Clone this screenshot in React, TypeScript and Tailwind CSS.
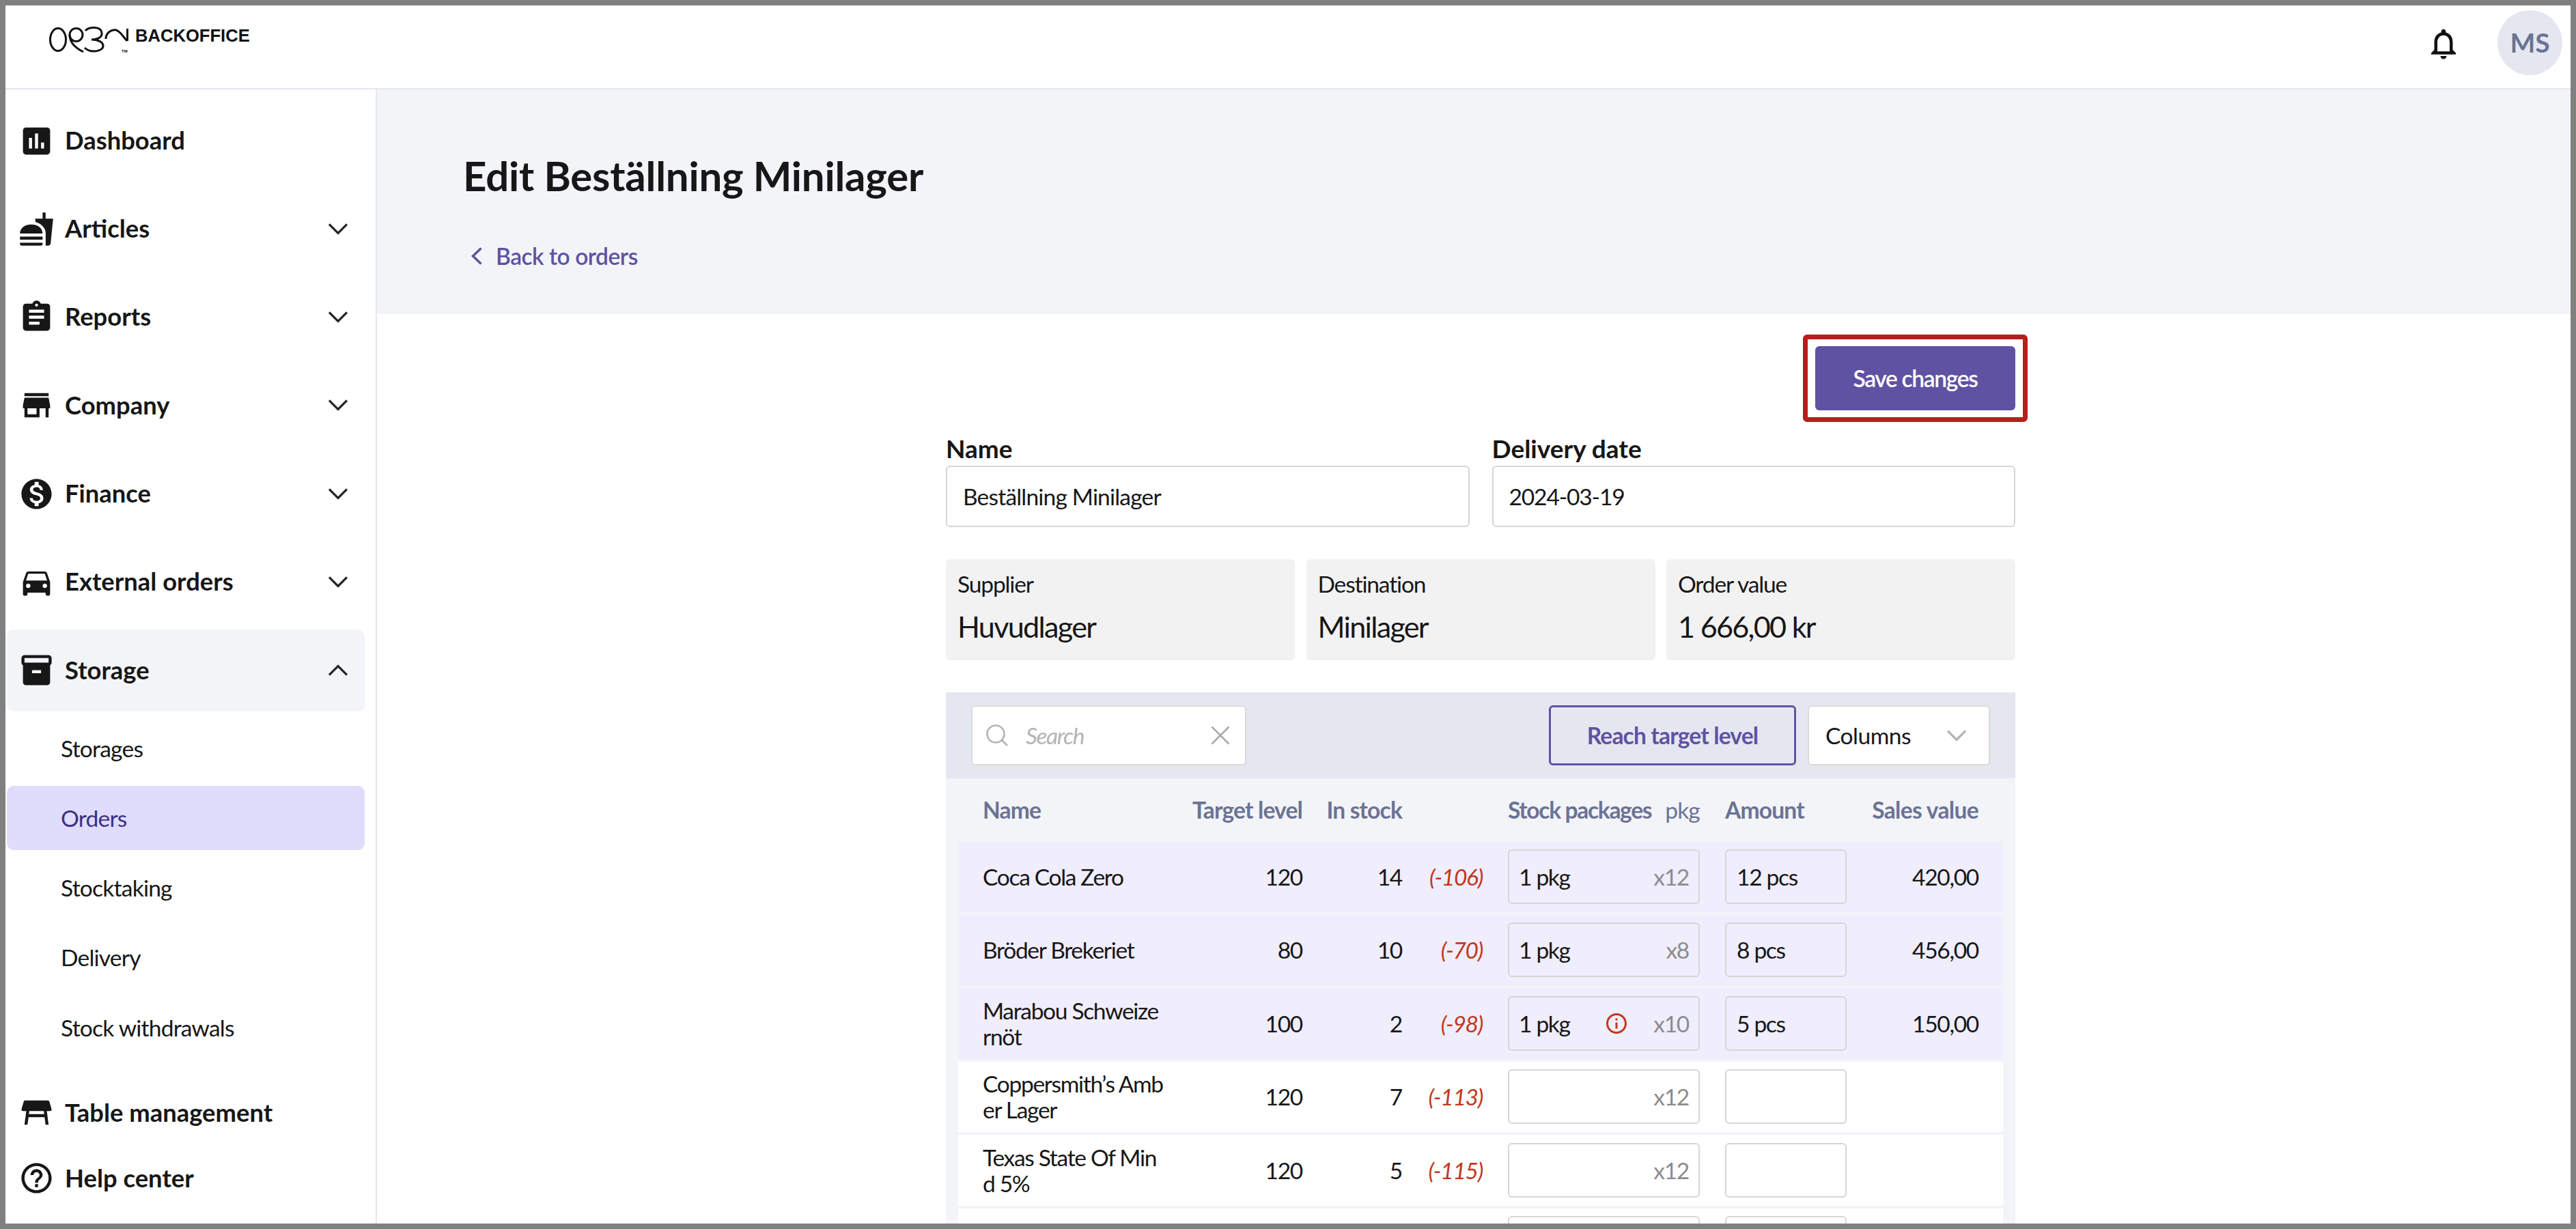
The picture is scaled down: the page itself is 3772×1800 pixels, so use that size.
import React from 'react';
import {
  MdInsertChart,
  MdFastfood,
  MdAssignment,
  MdStore,
  MdMonetizationOn,
  MdDirectionsCar,
  MdInventory2,
  MdTableRestaurant,
  MdHelpOutline,
  MdOutlineNotifications,
  MdInfoOutline,
} from 'react-icons/md';

const Chevron = ({ up = false, className = '' }: { up?: boolean; className?: string }) => (
  <svg viewBox="0 0 28 17" fill="none" stroke="currentColor" strokeWidth="3.2" className={`w-[28px] h-[17px] ${className}`}>
    <path d={up ? 'M1 15.5 14 2.5l13 13' : 'M1 1.5l13 13 13-13'} />
  </svg>
);

const Logo = () => (
  <div className="flex items-start ml-[58px] tracking-normal">
    <svg viewBox="0 0 130 46" fill="none" stroke="#111" strokeWidth="3" className="w-[130px] h-[46px] mt-[-1px]">
      <ellipse cx="19" cy="22" rx="11.5" ry="16.5" />
      <circle cx="45.5" cy="15" r="9.5" />
      <path d="M36 15c0 11 8 19 20 25" />
      <path d="M59 9c5-6 23-7 24 3 1 7-7 10-15 10 10 0 17 4 17 9 0 9-19 11-27 3" />
      <path d="M89 21c0-9 8-14 15-13 3 1 5 3 7 5l9 11" />
      <path d="M120.5 6v18" />
      <text x="112" y="41" fontSize="6" fontWeight="700" fill="#111" stroke="none" className="[font-family:'Liberation_Sans',sans-serif]">TM</text>
    </svg>
    <span className="ml-[2px] text-[25.6px] leading-[30px] font-bold text-[#111] [font-family:'Liberation_Sans',sans-serif]">BACKOFFICE</span>
  </div>
);

const navTop = [
  { label: 'Dashboard', icon: MdInsertChart, arrow: false },
  { label: 'Articles', icon: MdFastfood, arrow: true },
  { label: 'Reports', icon: MdAssignment, arrow: true },
  { label: 'Company', icon: MdStore, arrow: true },
  { label: 'Finance', icon: MdMonetizationOn, arrow: true },
  { label: 'External orders', icon: MdDirectionsCar, arrow: true },
];

const subNav = ['Storages', 'Orders', 'Stocktaking', 'Delivery', 'Stock withdrawals'];

const rows = [
  { name: 'Coca Cola Zero', target: '120', stock: '14', diff: '(-106)', pkg: '1 pkg', mult: 'x12', amount: '12 pcs', sales: '420,00', on: true },
  { name: 'Bröder Brekeriet', target: '80', stock: '10', diff: '(-70)', pkg: '1 pkg', mult: 'x8', amount: '8 pcs', sales: '456,00', on: true },
  { name: 'Marabou Schweizernöt', target: '100', stock: '2', diff: '(-98)', pkg: '1 pkg', mult: 'x10', amount: '5 pcs', sales: '150,00', on: true, warn: true },
  { name: 'Coppersmith’s Amber Lager', target: '120', stock: '7', diff: '(-113)', pkg: '', mult: 'x12', amount: '', sales: '', on: false },
  { name: 'Texas State Of Mind 5%', target: '120', stock: '5', diff: '(-115)', pkg: '', mult: 'x12', amount: '', sales: '', on: false },
  { name: '', target: '', stock: '', diff: '', pkg: '', mult: '', amount: '', sales: '', on: false },
];

const gridCols = 'grid grid-cols-[337px_167px_146px_118px_318px_215px_193px_36px]';

export default function App() {
  return (
    <div className="w-[3772px] h-[1800px] border-8 border-[#808080] bg-white overflow-hidden flex flex-col text-[#171717] tracking-[-0.032em] [font-family:Lato,sans-serif]">
      {/* HEADER */}
      <header className="h-[123px] shrink-0 border-b-2 border-[#e5e7f0] flex items-start justify-between pt-[29px]">
        <Logo />
        <div className="flex items-center mt-[-22px] pr-[12px]">
          <MdOutlineNotifications className="w-[54px] h-[54px] text-[#111] mt-[2px]" />
          <div className="w-[95px] h-[95px] ml-[52px] rounded-full bg-[#e5e7f0] flex items-center justify-center text-[39px] font-bold tracking-normal text-[#6b7394]">MS</div>
        </div>
      </header>

      <div className="flex flex-1 min-h-0">
        {/* SIDEBAR */}
        <aside className="w-[544px] shrink-0 border-r-2 border-[#e5e7f0] pt-[15px] pl-[2px] pr-[16px]">
          <nav className="flex flex-col gap-[9.33px]">
            {navTop.map((item) => (
              <div key={item.label} className="h-[120px] flex items-center pl-[17px] pr-[25px]">
                <item.icon className="w-[53px] h-[53px] shrink-0 text-[#171717]" />
                <span className="ml-[15px] mb-[2px] text-[36.4px] font-bold tracking-normal">{item.label}</span>
                {item.arrow && <Chevron className="ml-auto text-[#262626]" />}
              </div>
            ))}
            <div className="h-[120px] flex items-center pl-[17px] pr-[25px] rounded-[10px] bg-[#f3f4f8]">
              <MdInventory2 className="w-[53px] h-[53px] shrink-0 text-[#171717]" />
              <span className="ml-[15px] mb-[2px] text-[36.4px] font-bold tracking-normal">Storage</span>
              <Chevron up className="ml-auto text-[#262626]" />
            </div>
          </nav>
          <div className="flex flex-col gap-[8.75px] mt-[7px] tracking-[-0.05em]">
            {subNav.map((label) => (
              <div key={label} className={`h-[93.5px] flex items-center pl-[79px] rounded-[10px] text-[33.6px] ${label === 'Orders' ? 'bg-[#e0dcfb] text-[#3b3185]' : ''}`}>
                {label}
              </div>
            ))}
          </div>
          <div className="mt-[30px] h-[96px] flex items-center pl-[17px]">
            <MdTableRestaurant className="w-[53px] h-[53px] shrink-0" />
            <span className="ml-[15px] text-[36.4px] font-bold tracking-normal">Table management</span>
          </div>
          <div className="h-[96px] flex items-center pl-[17px]">
            <MdHelpOutline className="w-[53px] h-[53px] shrink-0" />
            <span className="ml-[15px] text-[36.4px] font-bold tracking-normal">Help center</span>
          </div>
        </aside>

        {/* MAIN */}
        <main className="flex-1 min-w-0 flex flex-col">
          <div className="h-[329px] shrink-0 bg-[#f3f4f8] pl-[126px] pt-[89px]">
            <h1 className="text-[60px] leading-[74px] font-bold tracking-[-0.004em]">Edit Beställning Minilager</h1>
            <div className="flex items-center mt-[61px] text-[33.6px] leading-[40px] font-semibold text-[#5f52a3]">
              <svg viewBox="0 0 16 26" fill="none" stroke="currentColor" strokeWidth="3.6" className="w-[16px] h-[26px] ml-[12px] mr-[20px]">
                <path d="M14.5 1.5 2.5 13l12 11.5" />
              </svg>
              Back to orders
            </div>
          </div>

          <div className="ml-[833px] w-[1566px] pt-[47px]">
            <div className="flex justify-end">
              <div className="relative">
                <button className="w-[293px] h-[94px] rounded-[6px] bg-[#5f52a3] text-white text-[33.6px] font-semibold tracking-[-0.04em]">Save changes</button>
                <div className="absolute -left-[18px] -right-[18px] -top-[17px] -bottom-[17px] border-[7px] border-[#b91c1c] rounded-[6px]" />
              </div>
            </div>

            <div className="grid grid-cols-2 gap-x-[33px] mt-[33px]">
              <div>
                <label className="block text-[37px] leading-[46px] font-bold tracking-normal">Name</label>
                <div className="mt-[2px] h-[90px] border-2 border-[#d6d6d6] rounded-[6px] flex items-center pl-[23px] text-[33.6px] tracking-[-0.025em]">Beställning Minilager</div>
              </div>
              <div>
                <label className="block text-[37px] leading-[46px] font-bold tracking-normal">Delivery date</label>
                <div className="mt-[2px] h-[90px] border-2 border-[#d6d6d6] rounded-[6px] flex items-center pl-[23px] text-[33.6px] tracking-[-0.035em]">2024-03-19</div>
              </div>
            </div>

            <div className="grid grid-cols-3 gap-x-[16.5px] mt-[47px]">
              {[
                ['Supplier', 'Huvudlager'],
                ['Destination', 'Minilager'],
                ['Order value', '1 666,00 kr'],
              ].map(([label, value]) => (
                <div key={label} className="h-[148px] rounded-[6px] bg-[#f2f2f2] pl-[17px] pt-[15px]">
                  <div className="text-[33.6px] leading-[42px] tracking-[-0.035em]">{label}</div>
                  <div className="mt-[15px] text-[43.2px] leading-[52px] tracking-[-0.04em]">{value}</div>
                </div>
              ))}
            </div>

            {/* TOOLBAR */}
            <div className="mt-[47px] h-[126px] bg-[#e5e7f0] flex items-center pl-[37px] pr-[37px]">
              <div className="w-[403px] h-[88px] bg-white border-2 border-[#d9d9d9] rounded-[6px] flex items-center pl-[20px] pr-[22px]">
                <svg viewBox="0 0 32 32" fill="none" stroke="#b3b3b3" strokeWidth="2.6" className="w-[32px] h-[32px]">
                  <circle cx="14" cy="14" r="12.5" />
                  <path d="m23 23 8 8" />
                </svg>
                <span className="ml-[26px] text-[33.6px] italic tracking-[-0.045em] text-[#b5b5b5]">Search</span>
                <svg viewBox="0 0 28 28" fill="none" stroke="#a8a8a8" strokeWidth="2.6" className="ml-auto w-[28px] h-[28px]">
                  <path d="m1.5 1.5 25 25M26.5 1.5l-25 25" />
                </svg>
              </div>
              <button className="ml-auto w-[362px] h-[88px] border-[3px] border-[#5f52a3] rounded-[6px] text-[33.6px] font-bold tracking-[-0.025em] text-[#5f52a3]">Reach target level</button>
              <div className="ml-[17px] w-[267px] h-[88px] bg-white border-2 border-[#d9d9d9] rounded-[6px] flex items-center pl-[24px] pr-[33px] text-[33.6px]">
                Columns
                <Chevron className="ml-auto text-[#b3b3b3]" />
              </div>
            </div>

            {/* TABLE */}
            <div className="bg-[#f3f4f8] px-[18px] h-[700px]">
              <div className={`${gridCols} h-[92px] items-center text-[33.6px] font-bold tracking-[-0.025em] text-[#6b7394] whitespace-nowrap`}>
                <div className="pl-[36px]">Name</div>
                <div className="text-right">Target level</div>
                <div className="text-right">In stock</div>
                <div />
                <div className="pl-[37px] flex justify-between">
                  <span className="tracking-[-0.04em]">Stock packages</span>
                  <span className="font-normal">pkg</span>
                </div>
                <div className="pl-[37px]">Amount</div>
                <div className="text-right tracking-[-0.02em]">Sales value</div>
                <div />
              </div>
              <div className="flex flex-col gap-[4px]">
                {rows.map((r, i) => (
                  <div key={i} className={`${gridCols} h-[103.5px] items-center text-[33.6px] leading-[38px] tracking-[-0.04em] ${r.on ? 'bg-[#f0edfd]' : 'bg-white'}`}>
                    <div className="pl-[36px] pr-[34px] break-all">{r.name}</div>
                    <div className="text-right">{r.target}</div>
                    <div className="text-right">{r.stock}</div>
                    <div className="text-right italic text-[#c0391b]">{r.diff}</div>
                    <div className="pl-[37px]">
                      <div className="h-[80px] border-2 border-[#d6d6d6] rounded-[6px] flex items-center pl-[14px] pr-[14px]">
                        <span>{r.pkg}</span>
                        {r.warn && <MdInfoOutline className="w-[36px] h-[36px] ml-[50px] text-[#c0391b]" />}
                        <span className="ml-auto text-[#8c8c8c]">{r.mult}</span>
                      </div>
                    </div>
                    <div className="pl-[37px]">
                      <div className="h-[80px] border-2 border-[#d6d6d6] rounded-[6px] flex items-center pl-[15px]">{r.amount}</div>
                    </div>
                    <div className="text-right">{r.sales}</div>
                    <div />
                  </div>
                ))}
              </div>
            </div>
          </div>
        </main>
      </div>
    </div>
  );
}
